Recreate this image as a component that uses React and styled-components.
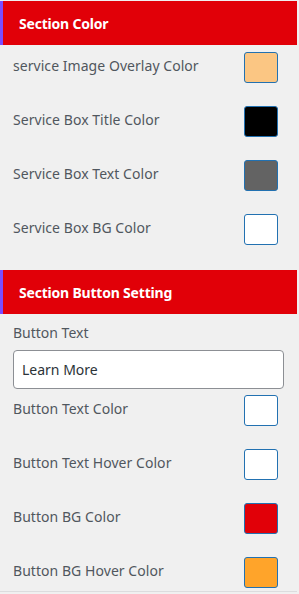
import React from "react";
import styled, { createGlobalStyle } from "styled-components";

const GlobalStyle = createGlobalStyle`
  html, body {
    margin: 0;
    padding: 0;
    background: #f0f0f0;
  }
  body {
    font-family: "Noto Sans", "Open Sans", "Liberation Sans", sans-serif;
  }
`;

const Panel = styled.div`
  width: 297px;
  padding-top: 1px;
  padding-bottom: 3px;
  border-bottom: 1px solid #dcdcde;
`;

const SectionHead = styled.div`
  height: 44px;
  display: flex;
  align-items: center;
  padding-left: 16px;
  background: #e10008;
  border-left: 3px solid #7b4dff;
  box-sizing: border-box;
  color: #fff;
  font-size: 14px;
  font-weight: 700;
  letter-spacing: -0.2px;
  margin-top: ${(p) => (p.$first ? "0" : "25px")};
`;

const Body = styled.div`
  display: flex;
  flex-direction: column;
  gap: ${(p) => p.$gap ?? 23}px;
  padding: ${(p) => p.$top ?? 7}px 19px 0 13px;
`;

const Row = styled.div`
  display: flex;
  align-items: center;
  justify-content: space-between;
  height: 31px;
`;

const Label = styled.span`
  color: #50575e;
  font-size: 14px;
  letter-spacing: 0.05px;
  padding-bottom: 5px;
`;

const Swatch = styled.div`
  width: 34px;
  height: 31px;
  box-sizing: border-box;
  border: 1px solid #2271b1;
  border-radius: 3px;
  background: ${(p) => p.$color};
`;

const Field = styled.div`
  display: flex;
  flex-direction: column;
`;

const FieldLabel = styled.span`
  color: #50575e;
  font-size: 14px;
  line-height: 20px;
  margin-top: 1px;
`;

const TextInput = styled.input`
  margin-top: 7px;
  width: 271px;
  height: 39px;
  box-sizing: border-box;
  border: 1px solid #8c8f94;
  border-radius: 4px;
  background: #fff;
  padding: 0 8px;
  font-family: inherit;
  font-size: 14px;
  color: #2c3338;
  outline: none;
`;

const sectionOne = [
  { label: "service Image Overlay Color", color: "#fbc683" },
  { label: "Service Box Title Color", color: "#000000" },
  { label: "Service Box Text Color", color: "#636363" },
  { label: "Service Box BG Color", color: "#ffffff" },
];

const sectionTwo = [
  { label: "Button Text Color", color: "#ffffff" },
  { label: "Button Text Hover Color", color: "#ffffff" },
  { label: "Button BG Color", color: "#e10008" },
  { label: "Button BG Hover Color", color: "#ffa42a" },
];

export default function App() {
  return (
    <>
      <GlobalStyle />
      <Panel>
        <SectionHead $first>Section Color</SectionHead>
        <Body>
          {sectionOne.map((item) => (
            <Row key={item.label}>
              <Label>{item.label}</Label>
              <Swatch $color={item.color} />
            </Row>
          ))}
        </Body>

        <SectionHead>Section Button Setting</SectionHead>
        <Body $top={8} $gap={0}>
          <Field>
            <FieldLabel>Button Text</FieldLabel>
            <TextInput defaultValue="Learn More" />
          </Field>
        </Body>
        <Body $top={6}>
          {sectionTwo.map((item) => (
            <Row key={item.label}>
              <Label>{item.label}</Label>
              <Swatch $color={item.color} />
            </Row>
          ))}
        </Body>
      </Panel>
    </>
  );
}
